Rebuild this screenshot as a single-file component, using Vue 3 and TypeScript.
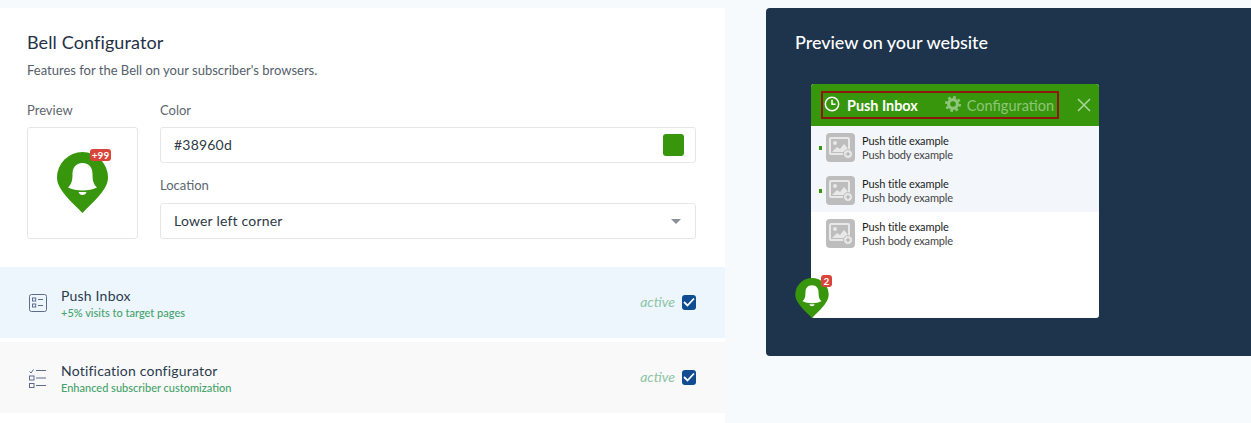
<script setup lang="ts">
interface Feature { title: string; sub: string; tone: string; icon: string }
const features: Feature[] = [
  { title: 'Push Inbox', sub: '+5% visits to target pages', tone: 'blue', icon: 'inbox' },
  { title: 'Notification configurator', sub: 'Enhanced subscriber customization', tone: 'grey', icon: 'config' },
]
const pushes = [{ unread: true }, { unread: true }, { unread: false }]
const pin = 'M25.5 0A25.5 25.5 0 0 1 51 25.5C51 38 36 50 25.5 61C15 50 0 38 0 25.500A25.5 25.5 0 0 1 25.5 0Z'
const bell = 'M25.5 11C18.5 11 15.500 16 15.500 22C15.500 29 14.500 32 11 35.500C15 37.500 20 38.500 25.500 38.500C31 38.500 36 37.500 40 35.500C36.500 32 35.500 29 35.500 22C35.500 16 32.500 11 25.500 11Z'
const clapper = 'M21.5 40H29.5C29 42 27.5 43 25.5 43C23.5 43 22 42 21.5 40Z'
</script>

<template>
  <div class="page">
    <main class="left">
      <section class="config">
        <h1 class="title">Bell Configurator</h1>
        <p class="subtitle">Features for the Bell on your subscriber's browsers.</p>
        <div class="form">
          <div class="preview-col">
            <div class="label">Preview</div>
            <div class="preview-box">
              <div class="bell-big">
                <svg width="51" height="61" viewBox="0 0 51 61">
                  <path :d="pin" fill="#38960d" />
                  <path :d="bell" fill="#fff" />
                  <path :d="clapper" fill="#fff" />
                </svg>
                <span class="badge-big">+99</span>
              </div>
            </div>
          </div>
          <div class="fields">
            <div class="label">Color</div>
            <div class="input">
              <span>#38960d</span>
              <span class="swatch"></span>
            </div>
            <div class="label second">Location</div>
            <div class="input">
              <span>Lower left corner</span>
              <span class="caret"></span>
            </div>
          </div>
        </div>
      </section>

      <section v-for="f in features" :key="f.title" class="feature" :class="f.tone">
        <svg v-if="f.icon === 'inbox'" class="ficon" width="20" height="20" viewBox="0 0 20 20" fill="none" stroke="#5d6c8c">
          <rect x="1.5" y="1.5" width="17" height="17" rx="2" stroke-width="1" />
          <rect x="4.5" y="5" width="3.2" height="3" stroke-width="1" />
          <rect x="4.5" y="11" width="3.2" height="3" stroke-width="1" />
          <path d="M10 6.5H15M10 12.5H15" stroke-width="1.2" />
        </svg>
        <svg v-else class="ficon" width="20" height="20" viewBox="0 0 20 20" fill="none" stroke="#5d6c8c">
          <path d="M1.5 3.500L3 5L5.500 1.500M8 2.500H18M8 10H18M8 17.500H18" stroke-width="1" />
          <rect x="1.5" y="8" width="4.5" height="4" stroke-width="1" />
          <rect x="1.5" y="15.500" width="4.5" height="4" stroke-width="1" />
        </svg>
        <div class="ftext">
          <div class="ftitle">{{ f.title }}</div>
          <div class="fsub">{{ f.sub }}</div>
        </div>
        <span class="active">active</span>
        <span class="check">
          <svg width="14" height="14" viewBox="0 0 14 14" fill="none">
            <path d="M2 7L5.500 10.500L12 3.500" stroke="#fff" stroke-width="1.800" />
          </svg>
        </span>
      </section>
    </main>

    <aside class="right">
      <div class="panel">
        <h2 class="panel-title">Preview on your website</h2>
        <div class="stage">
          <div class="widget">
            <header class="w-head">
              <div class="w-tabs">
                <span class="tab on">
                  <svg class="clock" width="16" height="16" viewBox="0 0 16 16" fill="none" stroke="#fff" stroke-width="1.500">
                    <circle cx="8" cy="8" r="6.700" />
                    <path d="M8 3.800V8.300H11.600" />
                  </svg>
                  Push Inbox
                </span>
                <span class="tab off">
                  <svg class="gear" width="16" height="16" viewBox="0 0 16 16" fill="none" stroke="#8fc57a">
                    <circle cx="8" cy="8" r="4.400" stroke-width="3.200" />
                    <circle cx="8" cy="8" r="6.700" stroke-width="2.600" stroke-dasharray="2.630 2.630" />
                  </svg>
                  Configuration
                </span>
              </div>
              <svg class="w-close" width="14" height="14" viewBox="0 0 14 14" fill="none" stroke="#a9d398" stroke-width="1.600">
                <path d="M1 1L13 13M13 1L1 13" />
              </svg>
            </header>
            <div v-for="(p, i) in pushes" :key="i" class="push" :class="{ unread: p.unread }">
              <span class="dot"></span>
              <span class="thumb">
                <svg width="24" height="22" viewBox="0 0 24 22" fill="none">
                  <rect x="1" y="1" width="19" height="16" rx="1" stroke="#e8e8e8" stroke-width="2" />
                  <circle cx="6" cy="6" r="2" fill="#e8e8e8" />
                  <path d="M3 15L8 10L11 12L15 7L18.500 11V15Z" fill="#e8e8e8" />
                  <circle cx="19" cy="17" r="4.500" fill="#e8e8e8" stroke="#bdbdbd" />
                  <path d="M19 14.800V19.200M16.800 17H21.200" stroke="#aaa" />
                </svg>
              </span>
              <div class="ptext">
                <div class="ptitle">Push title example</div>
                <div class="pbody">Push body example</div>
              </div>
            </div>
          </div>
          <div class="bell-small">
            <svg width="34" height="40" viewBox="0 0 51 61">
              <path :d="pin" fill="#38960d" />
              <path :d="bell" fill="#fff" />
              <path :d="clapper" fill="#fff" />
            </svg>
            <span class="badge-small">2</span>
          </div>
        </div>
      </div>
    </aside>
  </div>
</template>

<style>
html, body { margin: 0; background: #f6fafd; }
</style>

<style scoped>
* { box-sizing: border-box; }
.page {
  display: flex;
  width: 1251px;
  height: 423px;
  overflow: hidden;
  background: #f6fafd;
  font-family: Lato, "Open Sans", sans-serif;
  color: #1f3147;
}
.left {
  width: 725px;
  margin-top: 8px;
  background: #fff;
  flex: none;
}
.config { padding: 24px 29px 28px 27px; }
.title { margin: 0; font-size: 18px; line-height: 20px; font-weight: 400; color: #1f3147; letter-spacing: 0.12px; }
.subtitle { margin: 10px 0 0; font-size: 13px; line-height: 16px; color: #55606b; }
.form { display: flex; gap: 22px; margin-top: 24px; }
.preview-col { width: 111px; }
.label { font-size: 13px; line-height: 17px; color: #5d666f; margin-bottom: 8px; }
.label.second { margin-top: 14px; margin-bottom: 9px; }
.preview-box {
  width: 111px;
  height: 112px;
  border: 1px solid #e6e6e6;
  border-radius: 3px;
  display: flex;
  align-items: center;
  justify-content: center;
}
.bell-big { position: relative; width: 51px; height: 61px; margin-bottom: 1px; }
.bell-big svg { display: block; }
.badge-big {
  position: absolute;
  top: -3px;
  left: 33px;
  width: 21px;
  height: 12px;
  border-radius: 3px;
  background: #d9453a;
  color: #fff;
  font-size: 10px;
  font-weight: 700;
  line-height: 12px;
  text-align: center;
}
.fields { flex: 1; }
.input {
  height: 36px;
  border: 1px solid #e6e6e6;
  border-radius: 3px;
  padding: 0 11px 1px 13px;
  display: flex;
  align-items: center;
  justify-content: space-between;
  font-size: 14px;
  letter-spacing: 0.2px;
  color: #2d3a45;
}
.swatch { width: 21px; height: 22px; border-radius: 3px; background: #38960d; }
.caret {
  width: 0;
  height: 0;
  margin-right: 3px;
  margin-top: 1px;
  border-left: 5px solid transparent;
  border-right: 5px solid transparent;
  border-top: 5px solid #8a8f99;
}
.feature {
  height: 71px;
  display: flex;
  align-items: center;
  padding: 0 29px 0 28px;
  margin-bottom: 4px;
}
.feature.blue { background: #eef6fd; }
.feature.grey { background: #f9f9f9; }
.ficon { flex: none; margin-right: 13px; }
.ftext { flex: 1; padding-top: 2px; }
.ftitle { font-size: 14px; line-height: 17px; color: #2b3b4e; letter-spacing: 0.2px; }
.fsub { font-size: 11px; line-height: 14px; color: #45a36a; font-weight: 500; margin-top: 2px; }
.active { font-size: 14px; font-style: italic; color: #8cc4a4; margin-right: 7px; margin-bottom: 2px; }
.check {
  width: 14px;
  height: 15px;
  border-radius: 3px;
  background: #0f4c92;
  display: flex;
  align-items: center;
  margin-bottom: 1px;
}
.right { flex: 1; padding: 8px 0 0 41px; }
.panel {
  width: 485px;
  height: 348px;
  background: #1e334c;
  border-radius: 4px 0 0 4px;
  padding: 24px 29px 0;
}
.panel-title { margin: 0; font-size: 18px; line-height: 20px; font-weight: 500; color: #fff; letter-spacing: -0.04px; }
.stage { position: relative; margin: 32px 0 0 16px; width: 288px; }
.widget {
  width: 288px;
  height: 234px;
  border-radius: 3px;
  background: #fff;
  overflow: hidden;
}
.w-head {
  height: 42px;
  background: #38960d;
  display: flex;
  align-items: center;
  padding: 0 8px 0 10px;
  justify-content: space-between;
}
.w-tabs {
  width: 238px;
  height: 28px;
  border: 2px solid #8b1a0a;
  display: flex;
  align-items: center;
  justify-content: space-between;
  padding: 0 3px 0 1px;
}
.tab { display: flex; align-items: center; gap: 6px; font-size: 14px; }
.tab.on { color: #fff; font-weight: 700; font-size: 14.400px; gap: 7px; }
.tab.off { color: #8fc57a; font-weight: 400; font-size: 14.500px; }
.clock { margin-top: -3px; }
.gear { margin-top: -2px; }
.w-close { flex: none; }
.push {
  height: 43px;
  position: relative;
  display: flex;
  align-items: center;
  padding-left: 15px;
}
.push.unread { background: #f3f7fb; }
.dot { display: none; position: absolute; left: 8px; top: 20px; width: 3px; height: 4px; background: #38960d; }
.unread .dot { display: block; }
.thumb {
  width: 29px;
  height: 29px;
  border-radius: 4px;
  background: #bdbdbd;
  display: flex;
  align-items: center;
  justify-content: center;
  margin-right: 7px;
}
.ptext { font-size: 11px; line-height: 14px; color: #444; letter-spacing: -0.15px; }
.ptitle { color: #1c1c1c; letter-spacing: -0.1px; }
.bell-small { position: absolute; left: -16px; bottom: 0; width: 34px; height: 40px; }
.bell-small svg { display: block; }
.badge-small {
  position: absolute;
  top: -3px;
  left: 26px;
  width: 11px;
  height: 12px;
  border-radius: 3px;
  background: #d9453a;
  color: #fff;
  font-size: 10px;
  font-weight: 700;
  line-height: 12px;
  text-align: center;
}
</style>
